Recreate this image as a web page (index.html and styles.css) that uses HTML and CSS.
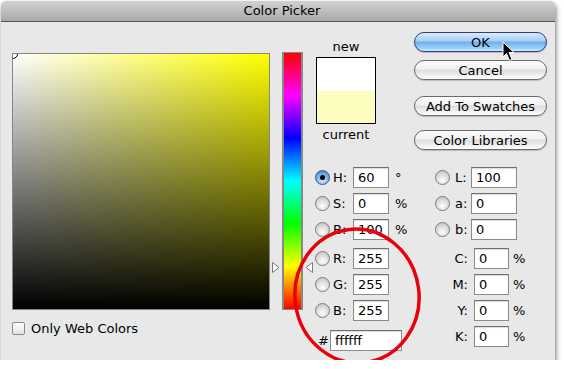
FILE: index.html
```html
<!DOCTYPE html>
<html lang="en">
<head>
  <meta charset="UTF-8">
  <title>Color Picker</title>
  <link rel="stylesheet" href="styles.css">
</head>
<body>

<div class="window">
  <div class="titlebar">Color Picker</div>
  <div class="content">

    <div class="col-field">
      <div class="field">
        <div class="field-marker"></div>
      </div>
      <label class="check-row"><span class="checkbox"></span>Only Web Colors</label>
    </div>

    <div class="col-hue">
      <div class="hue-bar">
        <svg class="hue-arrow left" width="8" height="11" viewBox="0 0 8 11">
          <path d="M0.5 0.5 L7 5.5 L0.5 10.5 Z" fill="#fff" stroke="#7a7a7a"/>
        </svg>
        <svg class="hue-arrow right" width="8" height="11" viewBox="0 0 8 11">
          <path d="M7.5 0.5 L1 5.5 L7.5 10.5 Z" fill="#fff" stroke="#7a7a7a"/>
        </svg>
      </div>
    </div>

    <div class="col-values">
      <div class="swatch-label">new</div>
      <div class="swatch">
        <div class="swatch-new"></div>
        <div class="swatch-current"></div>
      </div>
      <div class="swatch-label">current</div>

      <div class="rows hsb">
        <div class="row"><span class="radio on"></span><span class="lbl">H:</span><input class="num" value="60"><span class="unit">°</span></div>
        <div class="row"><span class="radio"></span><span class="lbl">S:</span><input class="num" value="0"><span class="unit">%</span></div>
        <div class="row"><span class="radio"></span><span class="lbl">B:</span><input class="num" value="100"><span class="unit">%</span></div>
      </div>
      <div class="rows rgb">
        <div class="row"><span class="radio"></span><span class="lbl">R:</span><input class="num" value="255"></div>
        <div class="row"><span class="radio"></span><span class="lbl">G:</span><input class="num" value="255"></div>
        <div class="row"><span class="radio"></span><span class="lbl">B:</span><input class="num" value="255"></div>
      </div>
      <div class="row hex-row"><span class="hash">#</span><input class="hex" value="ffffff"></div>
    </div>

    <div class="col-buttons">
      <button class="aqua default">OK</button>
      <button class="aqua cancel">Cancel</button>
      <button class="aqua swatches">Add To Swatches</button>
      <button class="aqua libraries">Color Libraries</button>

      <div class="rows lab">
        <div class="row"><span class="radio"></span><span class="lbl">L:</span><input class="num wide" value="100"></div>
        <div class="row"><span class="radio"></span><span class="lbl">a:</span><input class="num wide" value="0"></div>
        <div class="row"><span class="radio"></span><span class="lbl">b:</span><input class="num wide" value="0"></div>
      </div>
      <div class="rows cmyk">
        <div class="row"><span class="lbl-r">C:</span><input class="num" value="0"><span class="unit">%</span></div>
        <div class="row"><span class="lbl-r">M:</span><input class="num" value="0"><span class="unit">%</span></div>
        <div class="row"><span class="lbl-r">Y:</span><input class="num" value="0"><span class="unit">%</span></div>
        <div class="row"><span class="lbl-r">K:</span><input class="num" value="0"><span class="unit">%</span></div>
      </div>
    </div>

  </div>

  <!-- red circle drawn over the RGB fields -->
  <svg class="highlight" width="140" height="146" viewBox="0 0 140 146">
    <ellipse cx="70" cy="73" rx="62" ry="67" transform="rotate(-8 70 73)" fill="none" stroke="#e8000b" stroke-width="3.5"/>
  </svg>

  <svg class="cursor" width="14" height="22" viewBox="0 0 14 22">
    <path d="M1 1 L1 16 L4.5 12.5 L7.5 19.5 L10 18.5 L7 11.5 L12 11.5 Z" fill="#000" stroke="#fff" stroke-width="1" stroke-linejoin="round"/>
  </svg>
</div>

</body>
</html>
```

FILE: styles.css
```css
body {
  margin: 0;
  padding: 1px 0 0 1px;
  background: #fff;
  font-family: 'DejaVu Sans', Verdana, sans-serif;
  font-size: 12px;
  color: #000;
}

.window {
  position: relative;
  width: 554px;
  height: 359px;
  background: #e8e8e8;
  border-radius: 5px 5px 0 0;
  box-shadow: 1px 3px 5px rgba(0, 0, 0, 0.55);
}

.titlebar {
  height: 20px;
  line-height: 20px;
  text-align: center;
  font-size: 13px;
  border-radius: 5px 5px 0 0;
  background: linear-gradient(#d2d2d2, #a9a9a9);
  border-bottom: 1px solid #555;
  padding-left: 8px;
}

.content {
  display: flex;
}

/* saturation / brightness square */
.col-field {
  margin-left: 11px;
  padding-top: 31px;
}

.field {
  position: relative;
  width: 256px;
  height: 255px;
  border: 1px solid #858585;
  overflow: hidden;
  background:
    linear-gradient(to top, #000, rgba(0, 0, 0, 0)),
    linear-gradient(to right, #fff, #ff0);
}

.field-marker {
  position: absolute;
  left: -5px;
  top: -5px;
  width: 8px;
  height: 8px;
  border: 1px solid #000;
  border-radius: 50%;
}

.check-row {
  display: flex;
  align-items: center;
  margin-top: 12px;
  font-size: 13px;
  height: 12px;
}

.checkbox {
  width: 11px;
  height: 11px;
  border: 1px solid #8a8a8a;
  border-radius: 2px;
  background: linear-gradient(#fff, #e4e4e4);
  margin-right: 6px;
}

/* hue strip */
.col-hue {
  margin-left: 12px;
  padding-top: 30px;
}

.hue-bar {
  position: relative;
  width: 17px;
  height: 256px;
  border-style: solid;
  border-color: #888;
  border-width: 1px 2px;
  background: linear-gradient(#f00, #f0f 16.6%, #00f 33.3%, #0ff 50%, #0f0 66.6%, #ff0 83.3%, #f00);
}

.hue-arrow {
  position: absolute;
  top: 209px;
}

.hue-arrow.left {
  left: -12px;
}

.hue-arrow.right {
  right: -12px;
}

/* new / current and HSB RGB */
.col-values {
  margin-left: 12px;
  width: 99px;
  padding-top: 18px;
}

.swatch-label {
  width: 62px;
  text-align: center;
  font-size: 13px;
  line-height: 14px;
}

.swatch {
  width: 58px;
  height: 65px;
  margin: 3px 0 4px 1px;
  border: 1px solid #000;
}

.swatch-new {
  height: 33px;
  background: #fff;
}

.swatch-current {
  height: 32px;
  background: #fdfdc0;
}

.rows.hsb {
  margin-top: 22px;
}

.rows.lab {
  margin-top: 14px;
  margin-left: 21px;
}

.rows.rgb,
.rows.cmyk {
  margin-top: 3px;
}

.row {
  display: flex;
  align-items: center;
  height: 26px;
  font-size: 13px;
}

.radio {
  flex: none;
  width: 13px;
  height: 13px;
  border: 1px solid #7d7d7d;
  border-radius: 50%;
  background: radial-gradient(circle at 50% 70%, #fff, #d6d6d6 60%, #bcbcbc);
  margin-right: 3px;
  position: relative;
}

.radio.on {
  border-color: #3a5686;
  background: radial-gradient(circle at 50% 75%, #cfe8ff, #6aa8e6 60%, #3b76c0);
}

.radio.on::after {
  content: '';
  position: absolute;
  left: 4px;
  top: 4px;
  width: 5px;
  height: 5px;
  border-radius: 50%;
  background: #000;
}

.lbl {
  width: 20px;
}

.lab .radio {
  margin-right: 5px;
}

.lab .lbl {
  width: 16px;
}

.lbl-r {
  width: 54px;
  text-align: right;
  margin-right: 6px;
}

.num,
.hex {
  box-sizing: border-box;
  height: 21px;
  width: 36px;
  padding: 1px 0 0 4px;
  border: 1px solid #8b8b8b;
  border-top-color: #6f6f6f;
  box-shadow: inset 0 1px 1px rgba(0, 0, 0, 0.15);
  background: #fff;
  font-family: inherit;
  font-size: 13px;
  color: #000;
}

.num.wide {
  width: 46px;
}

.cmyk .num {
  width: 35px;
}

.unit {
  margin-left: 6px;
}

.cmyk .unit {
  margin-left: 4px;
}

.hex-row {
  margin-top: 4px;
}

.hash {
  width: 12px;
  margin-left: 3px;
}

.hex {
  width: 72px;
}

/* aqua buttons */
.col-buttons {
  width: 140px;
  padding-top: 10px;
  display: flex;
  flex-direction: column;
}

.aqua {
  width: 133px;
  height: 20px;
  padding: 0;
  border: 1px solid #6a6a6a;
  border-radius: 10px;
  font-family: inherit;
  font-size: 13px;
  color: #000;
  background: linear-gradient(#fdfdfd, #f1f1f1 45%, #dcdcdc 50%, #f4f4f4 85%, #fff);
  box-shadow: 0 1px 1px rgba(0, 0, 0, 0.2);
}

.aqua.default {
  border-color: #2e3f7a;
  background: linear-gradient(#d9ecfd, #a4cdf4 45%, #6eaeea 50%, #9bd0fb 85%, #d3effe);
}

.aqua.cancel {
  margin-top: 8px;
}

.aqua.swatches {
  margin-top: 16px;
}

.aqua.libraries {
  margin-top: 14px;
}

/* overlays */
.highlight {
  position: absolute;
  left: 286px;
  top: 222px;
}

.cursor {
  position: absolute;
  left: 501px;
  top: 40px;
}
```
